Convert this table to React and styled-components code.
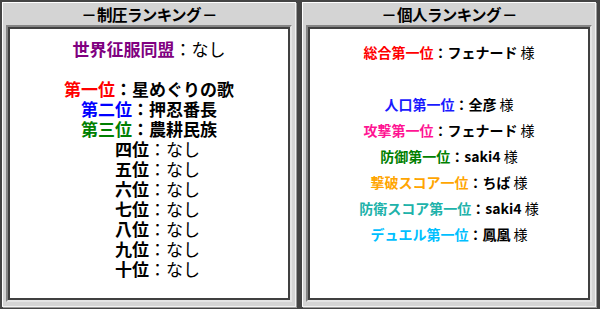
import React from "react";
import styled, { createGlobalStyle } from "styled-components";

const Global = createGlobalStyle`
  html, body {
    margin: 0;
    padding: 0;
    background: #444444;
    width: 600px;
    height: 309px;
    overflow: hidden;
  }
  body {
    font-family: "Noto Sans CJK JP", "Noto Sans", sans-serif;
  }
`;

const Board = styled.div`
  display: flex;
  gap: 6px;
  padding: 2px 4px 2px 2px;
  width: 600px;
  height: 309px;
  box-sizing: border-box;
  background: #444444;
`;

const Panel = styled.section`
  width: 294px;
  height: 305px;
  box-sizing: border-box;
  display: flex;
  flex-direction: column;
  background: #d4d4d4;
  border-top: 1px solid #ffffff;
  border-left: 1px solid #ffffff;
  border-right: 1px solid #f2f2f2;
  border-bottom: 1px solid #f2f2f2;
  box-shadow: 1px 1px 0 #9a9a9a;
  padding: 0 3px 4px 3px;
`;

const Title = styled.h2`
  margin: 0;
  height: 22px;
  line-height: 23px;
  text-align: center;
  font-size: 15.5px;
  font-weight: 700;
  color: #000;
  letter-spacing: -0.6px;
`;

const Dash = styled.span`
  display: inline-block;
  margin: 0 1px;
`;

const Inner = styled.div`
  flex: 1;
  box-sizing: border-box;
  background: #ffffff;
  border-style: solid;
  border-width: 2px;
  border-color: #858585 #e4e4e4 #e4e4e4 #858585;
  box-shadow: inset 0 0 0 2px #404040;
  padding: 12px 2px 0 2px;
  text-align: center;
`;

const Line = styled.div`
  font-size: ${(p) => (p.$small ? "14px" : "17px")};
  line-height: ${(p) => (p.$small ? "26px" : "20px")};
  height: ${(p) => (p.$small ? "26px" : "20px")};
  white-space: nowrap;
  color: #000;
  padding-left: ${(p) => (p.$indent ? "17px" : "0")};
`;

const Label = styled.span`
  font-weight: 700;
  color: ${(p) => p.$color || "#000"};
`;

const Value = styled.span`
  font-weight: ${(p) => (p.$bold ? 700 : 400)};
  color: #000;
`;

const Honor = styled.span`
  font-weight: 400;
  color: #000;
`;

const conquest = [
  { label: "第一位", color: "#ff0000", value: "星めぐりの歌", bold: true },
  { label: "第二位", color: "#0000ff", value: "押忍番長", bold: true },
  { label: "第三位", color: "#008000", value: "農耕民族", bold: true },
  { label: "四位", value: "なし", indent: true },
  { label: "五位", value: "なし", indent: true },
  { label: "六位", value: "なし", indent: true },
  { label: "七位", value: "なし", indent: true },
  { label: "八位", value: "なし", indent: true },
  { label: "九位", value: "なし", indent: true },
  { label: "十位", value: "なし", indent: true },
];

const personal = [
  { label: "人口第一位", color: "#1a1aff", value: "全彦" },
  { label: "攻撃第一位", color: "#ff1493", value: "フェナード" },
  { label: "防御第一位", color: "#008000", value: "saki4" },
  { label: "撃破スコア一位", color: "#ffa500", value: "ちば" },
  { label: "防衛スコア第一位", color: "#20b2aa", value: "saki4" },
  { label: "デュエル第一位", color: "#00bfff", value: "鳳凰" },
];

export default function App() {
  return (
    <>
      <Global />
      <Board>
        <Panel>
          <Title>
            <Dash>－</Dash>制圧ランキング<Dash>－</Dash>
          </Title>
          <Inner>
            <Line>
              <Label $color="#800080">世界征服同盟</Label>
              <Value>：なし</Value>
            </Line>
            <Line />
            {conquest.map((r) => (
              <Line key={r.label} $indent={r.indent}>
                <Label $color={r.color}>{r.label}</Label>
                <Value $bold={r.bold}>：{r.value}</Value>
              </Line>
            ))}
          </Inner>
        </Panel>
        <Panel>
          <Title>
            <Dash>－</Dash>個人ランキング<Dash>－</Dash>
          </Title>
          <Inner>
            <Line $small>
              <Label $color="#ff0000">総合第一位</Label>
              <Value $bold>：フェナード</Value> <Honor>様</Honor>
            </Line>
            <Line $small />
            {personal.map((r) => (
              <Line $small key={r.label}>
                <Label $color={r.color}>{r.label}</Label>
                <Value $bold>：{r.value}</Value> <Honor>様</Honor>
              </Line>
            ))}
          </Inner>
        </Panel>
      </Board>
    </>
  );
}
